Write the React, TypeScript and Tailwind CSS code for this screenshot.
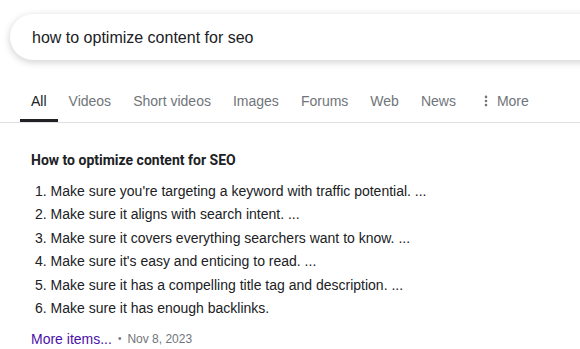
import { EllipsisVertical } from "lucide-react";

const tabs = ["All", "Videos", "Short videos", "Images", "Forums", "Web", "News"];

const steps = [
  "Make sure you're targeting a keyword with traffic potential. ...",
  "Make sure it aligns with search intent. ...",
  "Make sure it covers everything searchers want to know. ...",
  "Make sure it's easy and enticing to read. ...",
  "Make sure it has a compelling title tag and description. ...",
  "Make sure it has enough backlinks.",
];

export default function App() {
  return (
    <div className="h-[349px] w-[580px] overflow-hidden bg-white font-['Liberation_Sans',Arial,sans-serif] text-[#202124]">
      <div className="pl-[10px] pt-[14px]">
        <div className="flex h-[46px] w-[640px] items-center rounded-full bg-white pl-[22px] pt-[1px] text-[16px] shadow-[0_2px_6px_1px_rgba(64,60,67,0.2)]">
          how to optimize content for seo
        </div>
      </div>

      <div className="mt-[24px] flex whitespace-nowrap border-b border-[#e0e0e0] pl-[20px] text-[14px] leading-[16px] text-[#70757a]">
        {tabs.map((t, i) => (
          <div
            key={t}
            className={
              i === 0
                ? "border-b-[3px] border-[#202124] px-[11px] pb-[10px] pt-[9px] text-[#202124]"
                : "border-b-[3px] border-transparent px-[11px] pb-[10px] pt-[9px]"
            }
          >
            {t}
          </div>
        ))}
        <div className="flex items-start border-b-[3px] border-transparent pb-[10px] pl-[12px] pr-[11px] pt-[9px]">
          <EllipsisVertical size={14} strokeWidth={2.5} className="mr-[4px] mt-[1px]" />
          More
        </div>
      </div>

      <div className="pl-[31px] pt-[27px]">
        <h3 className="font-['Roboto',Arial,sans-serif] text-[14px] font-bold leading-[20px]">
          How to optimize content for SEO
        </h3>
        <ol className="mt-[10px] text-[14px] leading-[23.4px]">
          {steps.map((s, i) => (
            <li key={i} className="pl-[4px]">
              {i + 1}. {s}
            </li>
          ))}
        </ol>
        <div className="mt-[11px] flex items-center text-[14px] leading-[16px]">
          <span className="text-[#4b11a8]">More items...</span>
          <span className="mx-[6px] text-[10px] text-[#70757a]">•</span>
          <span className="text-[12px] text-[#70757a]">Nov 8, 2023</span>
        </div>
      </div>
    </div>
  );
}
